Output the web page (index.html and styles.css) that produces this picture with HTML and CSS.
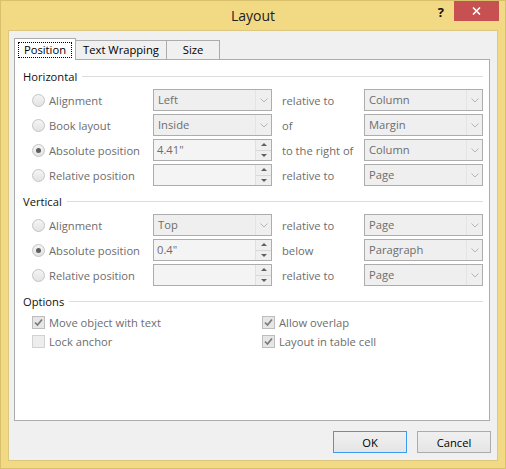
FILE: index.html
```html
<!DOCTYPE html>
<html>
<head>
<meta charset="utf-8">
<title>Layout</title>
<link rel="stylesheet" href="styles.css">
</head>
<body>
<div class="window">
  <div class="titlebar">
    <div></div>
    <div class="title">Layout</div>
    <div class="controls">
      <span class="help">?</span>
      <span class="close"><svg width="9" height="8" viewBox="0 0 9 8"><path d="M1 0.5 L8 7.5 M8 0.5 L1 7.5" stroke="#fff" stroke-width="1.6"/></svg></span>
    </div>
  </div>
  <div class="client">
    <div class="tabs">
      <div class="tab tab-pos active"><span class="focus">Position</span></div>
      <div class="tab tab-wrap">Text Wrapping</div>
      <div class="tab tab-size">Size</div>
    </div>
    <div class="panel">
      <section class="group">
        <div class="group-head"><span>Horizontal</span><i class="rule"></i></div>
        <div class="rows">
          <div class="choice"><span class="radio"></span>Alignment</div>
          <div class="combo"><span class="val">Left</span><span class="arr"><svg width="8" height="5" viewBox="0 0 8 5"><path d="M0.5 0.5 L4 4 L7.5 0.5" fill="none" stroke="#b5b5b5"/></svg></span></div>
          <div class="rel">relative to</div>
          <div class="combo"><span class="val">Column</span><span class="arr"><svg width="8" height="5" viewBox="0 0 8 5"><path d="M0.5 0.5 L4 4 L7.5 0.5" fill="none" stroke="#b5b5b5"/></svg></span></div>

          <div class="choice"><span class="radio"></span>Book layout</div>
          <div class="combo"><span class="val">Inside</span><span class="arr"><svg width="8" height="5" viewBox="0 0 8 5"><path d="M0.5 0.5 L4 4 L7.5 0.5" fill="none" stroke="#b5b5b5"/></svg></span></div>
          <div class="rel">of</div>
          <div class="combo"><span class="val">Margin</span><span class="arr"><svg width="8" height="5" viewBox="0 0 8 5"><path d="M0.5 0.5 L4 4 L7.5 0.5" fill="none" stroke="#b5b5b5"/></svg></span></div>

          <div class="choice"><span class="radio on"></span>Absolute position</div>
          <div class="spin"><span class="val">4.41"</span><span class="spinbtns"><i class="up"></i><i class="down"></i></span></div>
          <div class="rel">to the right of</div>
          <div class="combo"><span class="val">Column</span><span class="arr"><svg width="8" height="5" viewBox="0 0 8 5"><path d="M0.5 0.5 L4 4 L7.5 0.5" fill="none" stroke="#b5b5b5"/></svg></span></div>

          <div class="choice"><span class="radio"></span>Relative position</div>
          <div class="spin"><span class="val"></span><span class="spinbtns"><i class="up"></i><i class="down"></i></span></div>
          <div class="rel">relative to</div>
          <div class="combo"><span class="val">Page</span><span class="arr"><svg width="8" height="5" viewBox="0 0 8 5"><path d="M0.5 0.5 L4 4 L7.5 0.5" fill="none" stroke="#b5b5b5"/></svg></span></div>
        </div>
      </section>

      <section class="group">
        <div class="group-head"><span>Vertical</span><i class="rule"></i></div>
        <div class="rows">
          <div class="choice"><span class="radio"></span>Alignment</div>
          <div class="combo"><span class="val">Top</span><span class="arr"><svg width="8" height="5" viewBox="0 0 8 5"><path d="M0.5 0.5 L4 4 L7.5 0.5" fill="none" stroke="#b5b5b5"/></svg></span></div>
          <div class="rel">relative to</div>
          <div class="combo"><span class="val">Page</span><span class="arr"><svg width="8" height="5" viewBox="0 0 8 5"><path d="M0.5 0.5 L4 4 L7.5 0.5" fill="none" stroke="#b5b5b5"/></svg></span></div>

          <div class="choice"><span class="radio on"></span>Absolute position</div>
          <div class="spin"><span class="val">0.4"</span><span class="spinbtns"><i class="up"></i><i class="down"></i></span></div>
          <div class="rel">below</div>
          <div class="combo"><span class="val">Paragraph</span><span class="arr"><svg width="8" height="5" viewBox="0 0 8 5"><path d="M0.5 0.5 L4 4 L7.5 0.5" fill="none" stroke="#b5b5b5"/></svg></span></div>

          <div class="choice"><span class="radio"></span>Relative position</div>
          <div class="spin"><span class="val"></span><span class="spinbtns"><i class="up"></i><i class="down"></i></span></div>
          <div class="rel">relative to</div>
          <div class="combo"><span class="val">Page</span><span class="arr"><svg width="8" height="5" viewBox="0 0 8 5"><path d="M0.5 0.5 L4 4 L7.5 0.5" fill="none" stroke="#b5b5b5"/></svg></span></div>
        </div>
      </section>

      <section class="group">
        <div class="group-head"><span>Options</span><i class="rule"></i></div>
        <div class="checks">
          <div class="check"><span class="cb"><svg width="11" height="11" viewBox="0 0 11 11"><path d="M2 5.5 L4.5 8 L9 2.5" fill="none" stroke="#7b7b7b" stroke-width="1.7"/></svg></span>Move object with text</div>
          <div class="check"><span class="cb"><svg width="11" height="11" viewBox="0 0 11 11"><path d="M2 5.5 L4.5 8 L9 2.5" fill="none" stroke="#7b7b7b" stroke-width="1.7"/></svg></span>Allow overlap</div>
          <div class="check"><span class="cb off"></span>Lock anchor</div>
          <div class="check"><span class="cb"><svg width="11" height="11" viewBox="0 0 11 11"><path d="M2 5.5 L4.5 8 L9 2.5" fill="none" stroke="#7b7b7b" stroke-width="1.7"/></svg></span>Layout in table cell</div>
        </div>
      </section>
    </div>
    <div class="buttons">
      <button class="btn default">OK</button>
      <button class="btn">Cancel</button>
    </div>
  </div>
</div>
</body>
</html>
```

FILE: styles.css
```css
* { box-sizing: border-box; }
html, body { margin: 0; padding: 0; }
body {
  width: 506px;
  height: 469px;
  font-family: "Open Sans", "Noto Sans", sans-serif;
  font-size: 11.2px;
  color: #000;
}
.window {
  width: 506px;
  height: 469px;
  background: #f2d983;
  border: 1px solid #d9c06c;
  display: flex;
  flex-direction: column;
}
.titlebar {
  height: 29px;
  display: grid;
  grid-template-columns: 1fr auto 1fr;
}
.title {
  font-size: 14px;
  line-height: 29px;
  color: #222;
}
.controls {
  display: flex;
  justify-content: flex-end;
  align-items: flex-start;
}
.help {
  font-weight: bold;
  font-size: 13px;
  line-height: 13px;
  margin-top: 5px;
  margin-right: 10px;
  color: #111;
}
.close {
  width: 45px;
  height: 20px;
  margin-right: 6px;
  background: #c75050;
  display: flex;
  align-items: center;
  justify-content: center;
}
.client {
  flex: 1;
  margin: 0 7px 7px;
  border: 1px solid #dcc780;
  background: #f0f0f0;
  padding: 7px 7px 7px 5px;
  display: flex;
  flex-direction: column;
}
.tabs {
  display: flex;
  align-items: flex-end;
  height: 21px;
  position: relative;
  z-index: 1;
}
.tab {
  height: 19px;
  border: 1px solid #acacac;
  border-bottom: none;
  background: #f0f0f0;
  text-align: center;
  line-height: 18px;
  margin-left: -1px;
}
.tab-pos { width: 62px; margin-left: 0; }
.tab-wrap { width: 92px; }
.tab-size { width: 54px; }
.tab.active {
  height: 22px;
  margin-bottom: -1px;
  background: #fff;
  padding-top: 2px;
  position: relative;
  z-index: 2;
}
.focus {
  display: inline-block;
  border: 1px dotted #000;
  padding: 0 5px;
  line-height: 14px;
}
.panel {
  flex: 1;
  border: 1px solid #acacac;
  background: #fff;
  padding: 8px 6px 0 8px;
}
.group { margin-bottom: 7px; }
.group-head {
  display: flex;
  align-items: center;
  height: 16px;
  gap: 5px;
  color: #111;
}
.rule {
  flex: 1;
  height: 1px;
  background: #dcdcdc;
}
.rows {
  margin-top: 5px;
  padding-left: 9px;
  display: grid;
  grid-template-columns: 121px 119px 92px 119px;
  grid-auto-rows: 22px;
  row-gap: 3px;
  color: #6d6d6d;
}
.choice {
  display: flex;
  align-items: center;
  gap: 4px;
}
.radio {
  width: 13px;
  height: 13px;
  border-radius: 50%;
  border: 1px solid #c4c4c4;
  background: linear-gradient(#f4f4f4, #e3e3e3);
  display: flex;
  align-items: center;
  justify-content: center;
}
.radio.on::after {
  content: "";
  width: 5px;
  height: 5px;
  border-radius: 50%;
  background: #5e5e5e;
}
.rel {
  padding-left: 10px;
  display: flex;
  align-items: center;
}
.combo, .spin {
  display: flex;
  border: 1px solid #adadad;
  background: #efefef;
}
.val {
  flex: 1;
  padding-left: 4px;
  line-height: 20px;
}
.arr {
  width: 16px;
  border-left: 1px solid #e4e4e4;
  display: flex;
  align-items: center;
  justify-content: center;
}
.spin { background: #f4f4f4; }
.spin .val { padding-left: 3px; }
.spinbtns {
  width: 16px;
  display: flex;
  flex-direction: column;
  border-left: 1px solid #e0e0e0;
  background: #efefef;
}
.spinbtns i {
  flex: 1;
  display: flex;
  align-items: center;
  justify-content: center;
}
.spinbtns i.up { border-bottom: 1px solid #d8d8d8; }
.spinbtns i.up::after {
  content: "";
  border-left: 3px solid transparent;
  border-right: 3px solid transparent;
  border-bottom: 3px solid #606060;
}
.spinbtns i.down::after {
  content: "";
  border-left: 3px solid transparent;
  border-right: 3px solid transparent;
  border-top: 3px solid #606060;
}
.checks {
  margin-top: 5px;
  padding-left: 9px;
  display: grid;
  grid-template-columns: 230px 1fr;
  grid-auto-rows: 16px;
  row-gap: 3px;
  color: #6d6d6d;
}
.check {
  display: flex;
  align-items: center;
  gap: 4px;
}
.cb {
  width: 13px;
  height: 13px;
  border: 1px solid #bdbdbd;
  background: #e6e6e6;
  display: flex;
  align-items: center;
  justify-content: center;
}
.cb.off {
  border-color: #d2d2d2;
  background: #ededed;
}
.buttons {
  display: flex;
  justify-content: flex-end;
  gap: 10px;
  margin-top: 10px;
  margin-right: -1px;
}
.btn {
  width: 74px;
  height: 22px;
  border: 1px solid #acacac;
  background: linear-gradient(#f0f0f0, #e5e5e5);
  font-family: inherit;
  font-size: 11.2px;
  color: #000;
  padding: 0;
}
.btn.default { border-color: #3c9af0; }
```
